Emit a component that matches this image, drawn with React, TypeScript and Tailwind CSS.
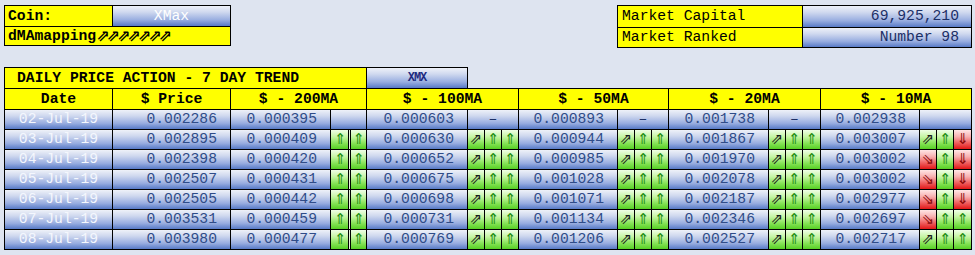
const mono = "font-['Liberation_Mono','Courier_New',monospace]";
const blue = "bg-[linear-gradient(to_bottom,#eef1f8_0%,#d0d9ef_30%,#98ade0_70%,#587ac6_100%)]";
const green = "bg-[linear-gradient(to_bottom,#effee6_0%,#c6f5a6_35%,#86e357_70%,#56d024_100%)]";
const red = "bg-[linear-gradient(to_bottom,#ffe6e6_0%,#f8b0b0_35%,#ee5a5a_70%,#e01818_100%)]";
const yellow = "bg-[#ffff00]";

type Arrow = "up" | "ne" | "se" | "down";
type Sig = { a: Arrow; c: "g" | "r" };

const glyph: Record<Arrow, string> = { up: "⇑", ne: "⇗", se: "⇘", down: "⇓" };
const glyphColor: Record<Arrow, string> = {
  up: "text-[#208c10]",
  ne: "text-[#1b1b1b]",
  se: "text-[#8a0b0b]",
  down: "text-[#8a0b0b]",
};

const g = (a: Arrow): Sig => ({ a, c: "g" });
const r = (a: Arrow): Sig => ({ a, c: "r" });

const rows: { date: string; price: string; ma: { v: string; s: Sig[] | null }[] }[] = [
  {
    date: "02-Jul-19",
    price: "0.002286",
    ma: [
      { v: "0.000395", s: null },
      { v: "0.000603", s: null },
      { v: "0.000893", s: null },
      { v: "0.001738", s: null },
      { v: "0.002938", s: null },
    ],
  },
  {
    date: "03-Jul-19",
    price: "0.002895",
    ma: [
      { v: "0.000409", s: [g("up"), g("up")] },
      { v: "0.000630", s: [g("ne"), g("up"), g("up")] },
      { v: "0.000944", s: [g("ne"), g("up"), g("up")] },
      { v: "0.001867", s: [g("ne"), g("up"), g("up")] },
      { v: "0.003007", s: [g("ne"), g("up"), r("down")] },
    ],
  },
  {
    date: "04-Jul-19",
    price: "0.002398",
    ma: [
      { v: "0.000420", s: [g("up"), g("up")] },
      { v: "0.000652", s: [g("ne"), g("up"), g("up")] },
      { v: "0.000985", s: [g("ne"), g("up"), g("up")] },
      { v: "0.001970", s: [g("ne"), g("up"), g("up")] },
      { v: "0.003002", s: [r("se"), g("up"), r("down")] },
    ],
  },
  {
    date: "05-Jul-19",
    price: "0.002507",
    ma: [
      { v: "0.000431", s: [g("up"), g("up")] },
      { v: "0.000675", s: [g("ne"), g("up"), g("up")] },
      { v: "0.001028", s: [g("ne"), g("up"), g("up")] },
      { v: "0.002078", s: [g("ne"), g("up"), g("up")] },
      { v: "0.003002", s: [r("se"), g("up"), r("down")] },
    ],
  },
  {
    date: "06-Jul-19",
    price: "0.002505",
    ma: [
      { v: "0.000442", s: [g("up"), g("up")] },
      { v: "0.000698", s: [g("ne"), g("up"), g("up")] },
      { v: "0.001071", s: [g("ne"), g("up"), g("up")] },
      { v: "0.002187", s: [g("ne"), g("up"), g("up")] },
      { v: "0.002977", s: [r("se"), g("up"), r("down")] },
    ],
  },
  {
    date: "07-Jul-19",
    price: "0.003531",
    ma: [
      { v: "0.000459", s: [g("up"), g("up")] },
      { v: "0.000731", s: [g("ne"), g("up"), g("up")] },
      { v: "0.001134", s: [g("ne"), g("up"), g("up")] },
      { v: "0.002346", s: [g("ne"), g("up"), g("up")] },
      { v: "0.002697", s: [r("se"), g("up"), g("up")] },
    ],
  },
  {
    date: "08-Jul-19",
    price: "0.003980",
    ma: [
      { v: "0.000477", s: [g("up"), g("up")] },
      { v: "0.000769", s: [g("ne"), g("up"), g("up")] },
      { v: "0.001206", s: [g("ne"), g("up"), g("up")] },
      { v: "0.002527", s: [g("ne"), g("up"), g("up")] },
      { v: "0.002717", s: [g("ne"), g("up"), g("up")] },
    ],
  },
];

const headers = ["$ - 200MA", "$ - 100MA", "$ - 50MA", "$ - 20MA", "$ - 10MA"];

function ArrowCell({ s, double }: { s: Sig; double?: boolean }) {
  return (
    <div
      className={`flex items-center justify-center font-['DejaVu_Sans',sans-serif] text-[15px] leading-none ${
        s.c === "g" ? green : red
      } ${glyphColor[s.a]} ${double ? "border-r border-r-[#e9f5e0] shadow-[inset_-1px_0_0_#000]" : ""}`}
    >
      {glyph[s.a]}
    </div>
  );
}

export default function App() {
  return (
    <div className={`w-[975px] h-[255px] bg-[#dee4f0] pt-[5px] pl-[4px] ${mono}`}>
      <div className="flex justify-between items-start w-[968px]">
        <div className="grid grid-cols-[107px_117px] grid-rows-[20px_18px] gap-px bg-black p-px">
          <div className={`${yellow} flex items-center pl-[3px] text-[14.7px] font-bold text-black`}>Coin:</div>
          <div className={`${blue} flex items-center justify-center text-[14.7px] text-white`}>XMax</div>
          <div className={`${yellow} col-span-2 flex items-center pl-[3px] text-[14.7px] font-bold text-black`}>
            dMAmapping
            <span className="font-['DejaVu_Sans',sans-serif] text-[16px] font-bold tracking-[-3px]">⇗⇗⇗⇗⇗⇗⇗</span>
          </div>
        </div>
        <div className="grid grid-cols-[184px_168px] grid-rows-[21px_19px] gap-px bg-black p-px">
          <div className={`${yellow} flex items-center pl-[4px] text-[14.7px] text-black`}>Market Capital</div>
          <div className={`${blue} flex items-center justify-end pr-[12px] text-[14.7px] text-[#1c2f66]`}>69,925,210</div>
          <div className={`${yellow} flex items-center pl-[4px] text-[14.7px] text-black`}>Market Ranked</div>
          <div className={`${blue} flex items-center justify-end pr-[12px] text-[14.7px] text-[#1c2f66]`}>Number 98</div>
        </div>
      </div>

      <div className="mt-[19px] flex">
        <div className={`${yellow} w-[363px] h-[21px] border-l border-t border-r border-black flex items-center pl-[12px] text-[14.7px] font-bold text-black`}>
          DAILY PRICE ACTION - 7 DAY TREND
        </div>
        <div className={`${blue} w-[101px] h-[21px] border-t border-r border-black flex items-center justify-center text-[12px] font-bold tracking-[-1px] text-[#1d2a80]`}>
          XMX
        </div>
      </div>

      <div className="grid w-fit grid-cols-[107px_117px_99px_19px_15px_100px_16px_16px_16px_98px_16px_16px_16px_99px_16px_16px_17px_98px_16px_16px_17px] grid-rows-[20px_repeat(7,19px)] gap-px bg-black p-px text-[14.7px]">
        <div className={`${yellow} flex items-center justify-center font-bold text-black`}>Date</div>
        <div className={`${yellow} flex items-center justify-center font-bold text-black`}>$ Price</div>
        <div className={`${yellow} col-span-3 flex items-center justify-center font-bold text-black`}>{headers[0]}</div>
        {headers.slice(1).map((h) => (
          <div key={h} className={`${yellow} col-span-4 flex items-center justify-center font-bold text-black`}>
            {h}
          </div>
        ))}

        {rows.map((row) => (
          <div key={row.date} className="contents">
            <div className={`${blue} flex items-center justify-center text-[#f4f7fd]`}>{row.date}</div>
            <div className={`${blue} flex items-center justify-end pr-[13px] text-[#2f4c88]`}>{row.price}</div>
            {row.ma.map((m, i) => {
              const span = i === 0 ? "col-span-2" : "col-span-3";
              return (
                <div key={i} className="contents">
                  <div className={`${blue} flex items-center justify-end pr-[13px] text-[#2f4c88]`}>{m.v}</div>
                  {m.s === null ? (
                    <div className={`${blue} ${span} flex items-center justify-center text-[#1c2f66]`}>
                      {i === 0 || i === 4 ? "" : "–"}
                    </div>
                  ) : (
                    m.s.map((s, j) => <ArrowCell key={j} s={s} double={i === 0 && j === 0} />)
                  )}
                </div>
              );
            })}
          </div>
        ))}
      </div>
    </div>
  );
}
